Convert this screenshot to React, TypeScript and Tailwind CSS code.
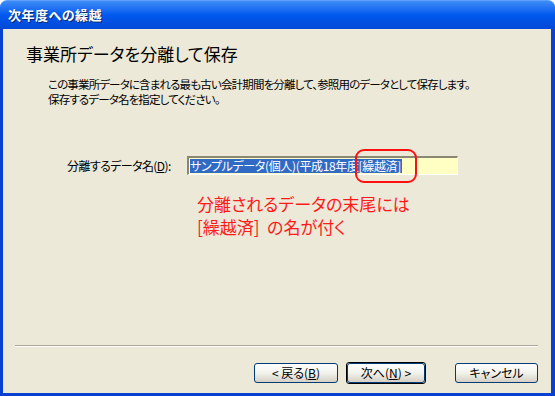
const FONT = "font-['MS_UI_Gothic','Noto_Sans_CJK_JP',sans-serif]";

function XpButton({ label, mnemonic, before, after, isDefault, width }: {
  label: string;
  mnemonic?: string;
  before?: string;
  after?: string;
  isDefault?: boolean;
  width: string;
}) {
  return (
    <div className={`${width} h-[22px] ${isDefault ? "border border-black" : "border border-transparent"} rounded-[3px]`}>
      <div className="h-full w-full rounded-[3px] border border-[#003c74] bg-gradient-to-b from-[#fefefe] via-[#f2f2ec] to-[#d6d0c5] flex items-center justify-center text-[12px] text-black leading-none">
        {before}
        {label}
        {mnemonic && (
          <>
            (<span className="underline">{mnemonic}</span>)
          </>
        )}
        {after}
      </div>
    </div>
  );
}

export default function App() {
  return (
    <div className={`w-[555px] h-[396px] flex flex-col overflow-hidden ${FONT} [font-feature-settings:'palt']`}>
      {/* title bar */}
      <div className="h-[29px] shrink-0 rounded-t-[7px] bg-gradient-to-b from-[#3d8cf6] via-[#0058ee] to-[#0349d6] flex items-center px-[8px] border-t border-[#5ea0ff]">
        <span className="text-white font-bold text-[13px] tracking-[0.5px] [text-shadow:1px_1px_0_#0a246a]">次年度への繰越</span>
      </div>

      {/* window body */}
      <div className="flex-1 flex flex-col bg-[#0840d0] pl-[3px] pr-[4px] pb-[3px]">
        <div className="relative flex-1 flex flex-col bg-[#ece9d8] text-black">
          <div className="pl-[23px] pt-[15px] text-[17px] leading-[20px]">事業所データを分離して保存</div>

          <div className="pl-[45px] pt-[13px] text-[11.5px] leading-[15px] tracking-[-0.85px]">
            <div>この事業所データに含まれる最も古い会計期間を分離して、参照用のデータとして保存します。</div>
            <div>保存するデータ名を指定してください。</div>
          </div>

          <div className="flex items-center pl-[64px] pt-[49px]">
            <span className="w-[120px] text-[12px] leading-none tracking-[-0.6px]">
              分離するデータ名(<span className="underline">D</span>):
            </span>
            <div className="w-[271px] h-[19px] bg-[#ffffc4] border-t-2 border-l-2 border-t-[#8a8775] border-l-[#8a8775] border-r border-b border-r-white border-b-white flex items-center pl-[1px]">
              <span className="bg-[#316ac5] text-white text-[12px] leading-[14px] pr-[1px] tracking-[-0.35px]">
                サンプルデータ(個人)(平成18年度[繰越済]
              </span>
            </div>
          </div>

          {/* annotation */}
          <div className="absolute left-[352px] top-[120px] w-[62px] h-[34px] rounded-[9px] border-2 border-[#ff1010]" />
          <div className="pl-[194px] pt-[17px] text-[17px] leading-[23px] text-[#ff1a1a]">
            <div>分離されるデータの末尾には</div>
            <div>[繰越済]&nbsp;&nbsp;の名が付く</div>
          </div>

          <div className="flex-1" />

          <div className="mx-[12px] mr-[13px] border-t border-[#aca899] border-b border-b-white" />

          <div className="flex items-center pt-[15px] pb-[9px]">
            <div className="w-[250px]" />
            <XpButton width="w-[86px]" before="< " label="戻る" mnemonic="B" />
            <div className="w-[7px]" />
            <XpButton width="w-[80px]" label="次へ" mnemonic="N" after=" >" isDefault />
            <div className="w-[28px]" />
            <XpButton width="w-[85px]" label="キャンセル" />
          </div>
        </div>
      </div>
    </div>
  );
}
